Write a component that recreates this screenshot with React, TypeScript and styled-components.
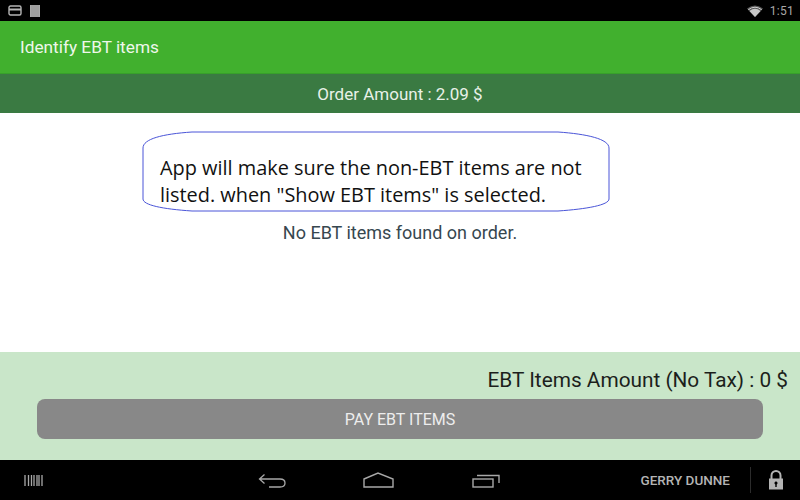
import React from "react";
import styled, { createGlobalStyle } from "styled-components";

const GlobalStyle = createGlobalStyle`
  html, body {
    margin: 0;
    padding: 0;
    background: #000;
  }
  body {
    font-family: Roboto, "Liberation Sans", sans-serif;
  }
`;

const Screen = styled.div`
  width: 800px;
  height: 500px;
  display: flex;
  flex-direction: column;
  overflow: hidden;
`;

const StatusBar = styled.div`
  height: 21px;
  background: #000;
  display: flex;
  align-items: center;
  padding: 0 6px 0 8px;
  color: #a8a8a8;
`;

const StatusLeft = styled.div`
  display: flex;
  align-items: center;
  gap: 8px;
  flex: 1;
`;

const Clock = styled.span`
  font-size: 12px;
  margin-left: 7px;
  letter-spacing: 0.3px;
`;

const AppBar = styled.div`
  height: 52px;
  background: #41b02e;
  border-bottom: 1px solid #37a02a;
  display: flex;
  align-items: center;
  padding-left: 20px;
  color: #eef7ea;
  font-size: 17.25px;
`;

const OrderBar = styled.div`
  height: 39px;
  padding-top: 1px;
  box-sizing: border-box;
  background: #3a7a42;
  display: flex;
  align-items: center;
  justify-content: center;
  color: #e8f1e8;
  font-size: 17px;
`;

const Content = styled.div`
  height: 239px;
  background: #fff;
  display: flex;
  flex-direction: column;
  align-items: center;
  padding-top: 18px;
  box-sizing: border-box;
`;

const Callout = styled.div`
  position: relative;
  width: 468px;
  height: 82px;
  box-sizing: border-box;
  padding: 23px 0 0 18px;
  margin-left: -48px;
  font-family: "Open Sans", sans-serif;
  font-size: 19.9px;
  line-height: 27px;
  color: #111;
  white-space: nowrap;
`;

const CalloutOutline = styled.svg`
  position: absolute;
  top: 0;
  left: 0;
`;

const EmptyText = styled.div`
  margin-top: 10px;
  font-size: 18px;
  line-height: 20px;
  color: #37474f;
`;

const Footer = styled.div`
  height: 108px;
  background: #c9e6c9;
  display: flex;
  flex-direction: column;
  padding: 16px 12px 0 37px;
  box-sizing: border-box;
`;

const AmountRow = styled.div`
  text-align: right;
  font-size: 20.8px;
  line-height: 24px;
  color: #1c1f1c;
`;

const PayButton = styled.button`
  margin: 7px 25px 0 0;
  height: 40px;
  border: none;
  border-radius: 8px;
  background: #888888;
  color: #ededed;
  font-family: inherit;
  font-size: 16px;
  padding: 0;
`;

const NavBar = styled.div`
  height: 40px;
  background: #000;
  display: grid;
  grid-template-columns: 258px 1fr 50px;
  align-items: center;
  color: #a8a8a8;
`;

const NavLeft = styled.div`
  padding-left: 24px;
  display: flex;
  align-items: center;
`;

const NavKeys = styled.div`
  display: flex;
  align-items: center;
`;

const NavKey = styled.div<{ $width: number }>`
  width: ${(p) => p.$width}px;
  display: flex;
`;

const UserName = styled.span`
  margin-left: auto;
  padding-right: 20px;
  font-size: 13.5px;
  font-weight: 500;
  color: #b4b4b4;
`;

const LockCell = styled.div`
  height: 26px;
  border-left: 1px solid #2c2c2c;
  display: flex;
  align-items: center;
  justify-content: center;
`;

export default function App() {
  return (
    <Screen>
      <GlobalStyle />
      <StatusBar>
        <StatusLeft>
          <svg width="14" height="11" viewBox="0 0 14 11">
            <rect x="1" y="1" width="12" height="9" rx="1.5" fill="none" stroke="#b5b5b5" strokeWidth="1.4" />
            <rect x="1" y="3.5" width="12" height="2" fill="#b5b5b5" />
          </svg>
          <svg width="10" height="12" viewBox="0 0 10 12">
            <rect width="10" height="12" fill="#a9a9a9" />
            <path d="M2 0v12M4 0v12M6 0v12M8 0v12" stroke="#8a8a8a" strokeWidth="0.7" />
          </svg>
        </StatusLeft>
        <svg width="16" height="12" viewBox="0 0 16 12">
          <path d="M0 3.6 Q8 -2.4 16 3.6 L8 12 Z" fill="#555" />
          <path d="M2.4 6 Q8 1.6 13.6 6 L8 12 Z" fill="#c8c8c8" />
          <path d="M1.2 4.8 Q8 -0.4 14.8 4.8" fill="none" stroke="#d0d0d0" strokeWidth="1" />
        </svg>
        <Clock>1:51</Clock>
      </StatusBar>
      <AppBar>Identify EBT items</AppBar>
      <OrderBar>Order Amount : 2.09 $</OrderBar>
      <Content>
        <Callout>
          <CalloutOutline width="468" height="82" viewBox="0 0 468 82">
            <path
              d="M50 1 L416 1 C445 3 467 8 467 17 L467 68 C467 74 445 78 416 80 L50 80 C20 78 1 74 1 68 L1 17 C1 8 20 3 50 1 Z"
              fill="none"
              stroke="#4a55d8"
              strokeWidth="1"
            />
          </CalloutOutline>
          App will make sure the non-EBT items are not
          <br />
          listed. when "Show EBT items" is selected.
        </Callout>
        <EmptyText>No EBT items found on order.</EmptyText>
      </Content>
      <Footer>
        <AmountRow>EBT Items Amount (No Tax) : 0 $</AmountRow>
        <PayButton>PAY EBT ITEMS</PayButton>
      </Footer>
      <NavBar>
        <NavLeft>
          <svg width="20" height="11" viewBox="0 0 20 11">
            <path d="M1 0v11M4.5 0v11M7.5 0v11M10 0v11M13 0v11M15 0v11M18 0v11" stroke="#a8a8a8" strokeWidth="1.3" />
          </svg>
        </NavLeft>
        <NavKeys>
          <NavKey $width={105}>
            <svg width="30" height="16" viewBox="0 0 30 16">
              <path d="M2 7H22Q27 7 27 11Q27 15 22 15H11M6.5 2.5L1.5 7L6.5 11.5" fill="none" stroke="#a8a8a8" strokeWidth="1.3" />
            </svg>
          </NavKey>
          <NavKey $width={109}>
            <svg width="32" height="16" viewBox="0 0 32 16">
              <path d="M1 7L15 1L30 7V15H1Z" fill="none" stroke="#a8a8a8" strokeWidth="1.4" />
            </svg>
          </NavKey>
          <NavKey $width={100}>
            <svg width="28" height="16" viewBox="0 0 28 16">
              <rect x="1" y="7" width="20" height="8" fill="none" stroke="#a8a8a8" strokeWidth="1.4" />
              <path d="M5 3.5H27V11" fill="none" stroke="#a8a8a8" strokeWidth="1.4" />
            </svg>
          </NavKey>
          <UserName>GERRY DUNNE</UserName>
        </NavKeys>
        <LockCell>
          <svg width="16" height="20" viewBox="0 0 16 20">
            <path d="M3.5 9V5.5a4.5 4.5 0 0 1 9 0V9" fill="none" stroke="#b4b4b4" strokeWidth="2" />
            <path d="M1 8.5H15V19.5H1Z M8 11.5a1.6 1.6 0 0 0-.7 3V17h1.4v-2.5a1.6 1.6 0 0 0-.7-3Z" fill="#b4b4b4" fillRule="evenodd" />
          </svg>
        </LockCell>
      </NavBar>
    </Screen>
  );
}
